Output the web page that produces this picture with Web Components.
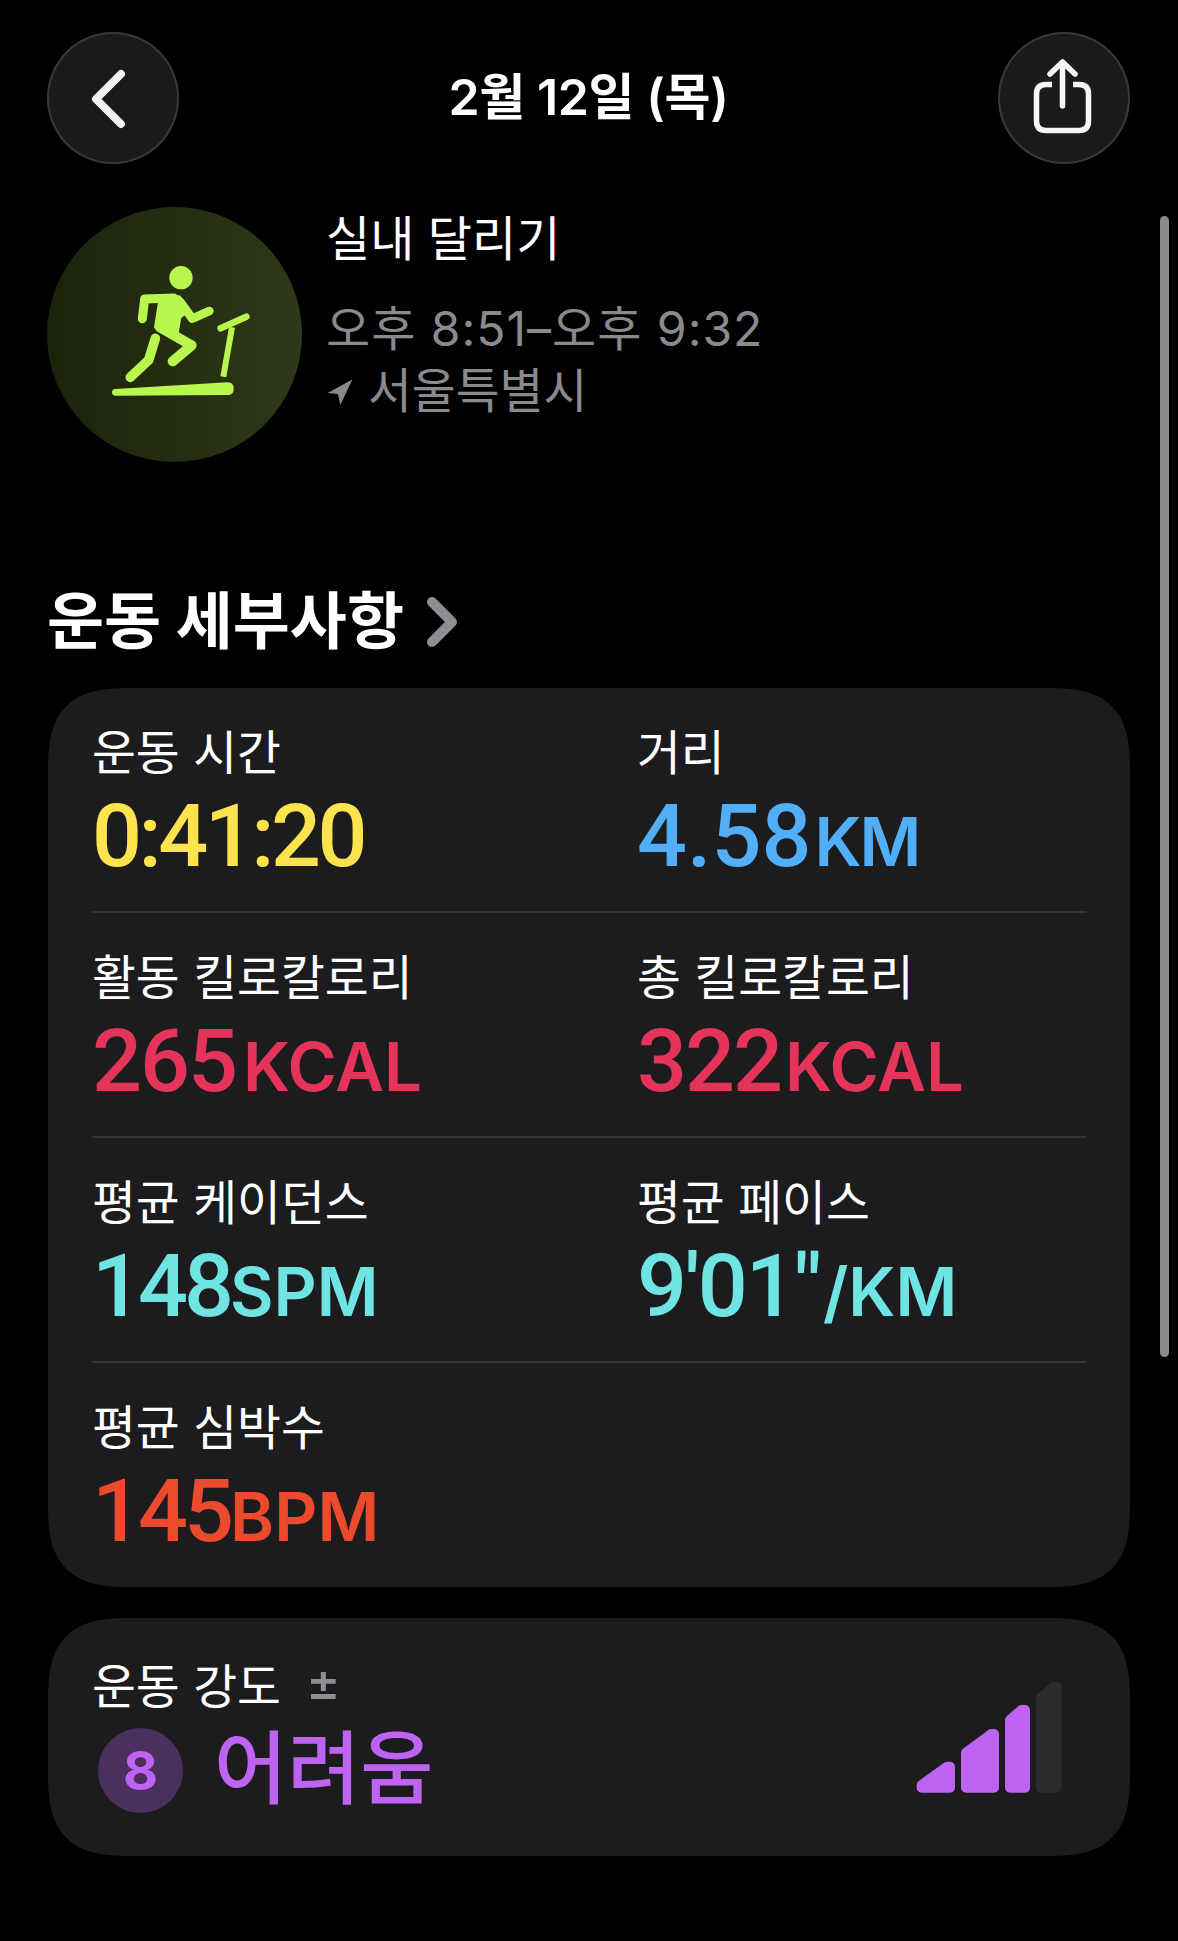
<!DOCTYPE html>
<html lang="ko">
<head>
<meta charset="utf-8">
<style>
  html, body { margin: 0; background: #000; }
  body { width: 1178px; height: 1941px; overflow: hidden; color: #fff;
    font-family: Inter, "Noto Sans CJK KR", sans-serif; }
</style>
</head>
<body>
<workout-page>
  <workout-nav title-text="2월 12일 (목)"></workout-nav>
  <workout-summary name="실내 달리기" time="오후 8:51–오후 9:32" place="서울특별시"></workout-summary>
  <section-heading>운동 세부사항</section-heading>
  <metric-card>
    <metric-item label="운동 시간" value="0:41:20" color="#fde34e" spacing="-3.5"></metric-item>
    <metric-item label="거리" value="4.58" unit="KM" color="#52aef7" spacing="0" unit-gap="3" unit-spacing="-2"></metric-item>
    <metric-item label="활동 킬로칼로리" value="265" unit="KCAL" color="#e5345a" unit-gap="7"></metric-item>
    <metric-item label="총 킬로칼로리" value="322" unit="KCAL" color="#e5345a" unit-gap="4"></metric-item>
    <metric-item label="평균 케이던스" value="148" unit="SPM" color="#6fe4e2" spacing="-4"></metric-item>
    <metric-item label="평균 페이스" value="9'01&quot;" unit="/KM" color="#6fe4e2" unit-gap="3"></metric-item>
    <metric-item label="평균 심박수" value="145" unit="BPM" color="#ec4a2c" spacing="-4"></metric-item>
  </metric-card>
  <effort-card label="운동 강도" level="8" text="어려움"></effort-card>
</workout-page>

<script>
const KR = `Inter, "Noto Sans CJK KR", sans-serif`;

class WorkoutPage extends HTMLElement {
  constructor() {
    super();
    this.attachShadow({ mode: "open" }).innerHTML = `
      <style>
        :host { display: block; position: relative; width: 1178px; height: 1941px; box-sizing: border-box; padding: 32px 48px 0 48px; }
        #bar { position: absolute; left: 1160px; top: 216px; width: 9px; height: 1141px; border-radius: 5px; background: #8a8a8a; }
      </style>
      <slot></slot>
      <div id="bar"></div>`;
  }
}

class WorkoutNav extends HTMLElement {
  constructor() {
    super();
    this.attachShadow({ mode: "open" }).innerHTML = `
      <style>
        :host { display: flex; align-items: center; justify-content: space-between; height: 132px; margin-left: -1px; }
        .btn { width: 132px; height: 132px; box-sizing: border-box; border-radius: 50%; background: #1a1a1b; box-shadow: inset 0 0 0 2px #38383a; flex: none; }
        svg { display: block; }
        h1 { margin: 0 0 2px; font: 600 50px/1 ${KR}; letter-spacing: -0.4px; }
      </style>
      <div class="btn">
        <svg width="132" height="132" viewBox="0 0 132 132" fill="none" stroke="#f2f2f2" stroke-width="8" stroke-linecap="round" stroke-linejoin="round">
          <path d="M74 42 L49 67 L74 92"/>
        </svg>
      </div>
      <h1></h1>
      <div class="btn">
        <svg width="132" height="132" viewBox="0 0 132 132" fill="none" stroke="#f6f6f6" stroke-width="5.5" stroke-linejoin="round">
          <path d="M54 52.5 H48 Q38.5 52.5 38.5 62 V89 Q38.5 98.5 48 98.5 H81 Q90.5 98.5 90.5 89 V62 Q90.5 52.5 81 52.5 H75"/>
          <path d="M64.5 74 V30 M52 42 L64.5 30 L77 42" stroke-linecap="round"/>
        </svg>
      </div>`;
    this.shadowRoot.querySelector("h1").textContent = this.getAttribute("title-text");
  }
}

class WorkoutSummary extends HTMLElement {
  constructor() {
    super();
    this.attachShadow({ mode: "open" }).innerHTML = `
      <style>
        :host { display: flex; gap: 24px; margin-top: 43px; margin-left: -1px; height: 255px; }
        #icon { width: 255px; height: 255px; border-radius: 50%; background: linear-gradient(90deg, #1b2308, #2e381a); flex: none; }
        #text { display: flex; flex-direction: column; }
        #name { font: 400 48px/56px ${KR}; color: #fff; margin-top: 4px; }
        #time, #place { font: 400 48px/62px ${KR}; color: #8a8a8e; }
        #time { margin-top: 31px; letter-spacing: 1px; }
        #place { display: flex; align-items: center; gap: 14px; font-size: 47.7px; }
        svg.loc { width: 28px; height: 28px; flex: none; }
      </style>
      <div id="icon">
        <svg width="255" height="255" viewBox="0 0 765 765">
          <g transform="translate(99 69)" fill="none" stroke="#b9f74f" stroke-linecap="round" stroke-linejoin="round">
            <circle cx="303" cy="143" r="35" fill="#b9f74f" stroke="none"/>
            <path d="M187 266 L194 207 L282 204" stroke-width="27"/>
            <path d="M240 205 L298 200 L328 240 L300 262 L292 310 L240 290 L226 292 Z" fill="#b9f74f" stroke-width="8"/>
            <path d="M300 215 L337 266 L388 243" stroke-width="26"/>
            <path d="M240 292 L335 346 L278 394" stroke-width="30"/>
            <path d="M226 325 L206 390 L151 442" stroke-width="29"/>
            <path d="M422 295 L499 260" stroke-width="20"/>
            <path d="M456 292 L430 440" stroke-width="18" stroke-linecap="butt"/>
            <path d="M106 477 L443 457 Q461 457 461 476 Q461 495 443 495 L106 497 Q96 497 96 487 Q96 478 106 477 Z" fill="#b9f74f" stroke="none"/>
          </g>
        </svg>
      </div>
      <div id="text">
        <div id="name"></div>
        <div id="time"></div>
        <div id="place">
          <svg class="loc" viewBox="0 0 33 33"><path d="M31 3 L2 19 L14 20 L17 33 Z" fill="#8a8a8e"/></svg>
          <span></span>
        </div>
      </div>`;
    const root = this.shadowRoot;
    root.querySelector("#name").textContent = this.getAttribute("name");
    root.querySelector("#time").textContent = this.getAttribute("time");
    root.querySelector("#place span").textContent = this.getAttribute("place");
  }
}

class SectionHeading extends HTMLElement {
  constructor() {
    super();
    this.attachShadow({ mode: "open" }).innerHTML = `
      <style>
        :host { display: flex; align-items: center; gap: 22px; margin-top: 124px; height: 72px; font: 700 62px/72px ${KR}; color: #fff; margin-left: -1px; }
        svg { flex: none; }
      </style>
      <slot></slot>
      <svg width="32" height="52" viewBox="0 0 32 52" fill="none" stroke="#8e8e93" stroke-width="10" stroke-linecap="round" stroke-linejoin="round"><path d="M6 6 L26 26 L6 46"/></svg>`;
  }
}

class MetricCard extends HTMLElement {
  constructor() {
    super();
    this.attachShadow({ mode: "open" }).innerHTML = `
      <style>
        :host { display: grid; grid-template-columns: 545px 1fr; margin-top: 30px; box-sizing: border-box; height: 899px; padding: 0 44px 0 44px; background: #1c1c1e; border-radius: 84px; corner-shape: superellipse(1.5); grid-auto-rows: 225px; align-content: start; }
      </style>
      <slot></slot>`;
  }
}

class MetricItem extends HTMLElement {
  constructor() {
    super();
    this.attachShadow({ mode: "open" }).innerHTML = `
      <style>
        :host { display: block; box-sizing: border-box; padding-top: 35px; border-bottom: 2px solid #333335; }
        :host(:nth-last-child(-n+1)) { border-bottom: none; }
        #label { font: 400 47.7px/60px ${KR}; color: #fff; }
        #value { font: 500 88px/90px Roboto, sans-serif; margin-top: 8px; letter-spacing: -2px; white-space: nowrap; }
        #unit { font: 600 67px/90px Inter, sans-serif; letter-spacing: 0; }
      </style>
      <div id="label"></div>
      <div id="value"><span id="num"></span><span id="unit"></span></div>`;
    const root = this.shadowRoot;
    root.querySelector("#label").textContent = this.getAttribute("label");
    root.querySelector("#num").textContent = this.getAttribute("value");
    const unit = root.querySelector("#unit");
    unit.textContent = this.getAttribute("unit") || "";
    if (this.hasAttribute("unit-gap")) unit.style.marginLeft = this.getAttribute("unit-gap") + "px";
    if (this.hasAttribute("unit-spacing")) unit.style.letterSpacing = this.getAttribute("unit-spacing") + "px";
    const value = root.querySelector("#value");
    value.style.color = this.getAttribute("color");
    if (this.hasAttribute("spacing")) value.style.letterSpacing = this.getAttribute("spacing") + "px";
  }
}

class EffortCard extends HTMLElement {
  constructor() {
    super();
    this.attachShadow({ mode: "open" }).innerHTML = `
      <style>
        :host { display: flex; align-items: flex-end; justify-content: space-between; margin-top: 31px; box-sizing: border-box; height: 238px; padding: 34px 50px 51px 44px; background: #1c1c1e; border-radius: 84px; corner-shape: superellipse(1.5); }
        #left { display: flex; flex-direction: column; align-self: flex-start; margin-top: 5px; }
        #label { font: 400 47.7px/60px ${KR}; color: #fff; display: flex; align-items: center; gap: 25px; }
        #pm { color: #8e8e93; font: 500 52px/1 Inter, sans-serif; position: relative; top: -5px; }
        #row { display: flex; align-items: center; gap: 31px; margin-top: 11px; margin-left: 6px; }
        #badge { width: 85px; height: 85px; border-radius: 50%; background: #4a2f5f; color: #bf63f3; font: 700 54px/85px Inter, sans-serif; text-align: center; flex: none; }
        #text { font: 500 79.5px/85px ${KR}; color: #bf63f3; position: relative; top: -2px; }
      </style>
      <div id="left">
        <div id="label"><span id="lb"></span><span id="pm">±</span></div>
        <div id="row"><div id="badge"></div><div id="text"></div></div>
      </div>
      <svg width="180" height="135" viewBox="0 0 540 405" stroke-width="30" stroke-linejoin="round">
        <g fill="#bf63f3" stroke="#bf63f3">
          <path d="M65 353 H150 V290 H142 L65 345 Z"/>
          <path d="M198 353 H282 V192 H274 L198 248 Z"/>
          <path d="M330 353 H375 V120 H365 L330 150 Z"/>
        </g>
        <path d="M423 353 H469 V52 H460 L423 82 Z" fill="#2c2c2e" stroke="#2c2c2e"/>
      </svg>`;
    const root = this.shadowRoot;
    root.querySelector("#lb").textContent = this.getAttribute("label");
    root.querySelector("#badge").textContent = this.getAttribute("level");
    root.querySelector("#text").textContent = this.getAttribute("text");
  }
}

customElements.define("workout-page", WorkoutPage);
customElements.define("workout-nav", WorkoutNav);
customElements.define("workout-summary", WorkoutSummary);
customElements.define("section-heading", SectionHeading);
customElements.define("metric-card", MetricCard);
customElements.define("metric-item", MetricItem);
customElements.define("effort-card", EffortCard);
</script>
</body>
</html>
